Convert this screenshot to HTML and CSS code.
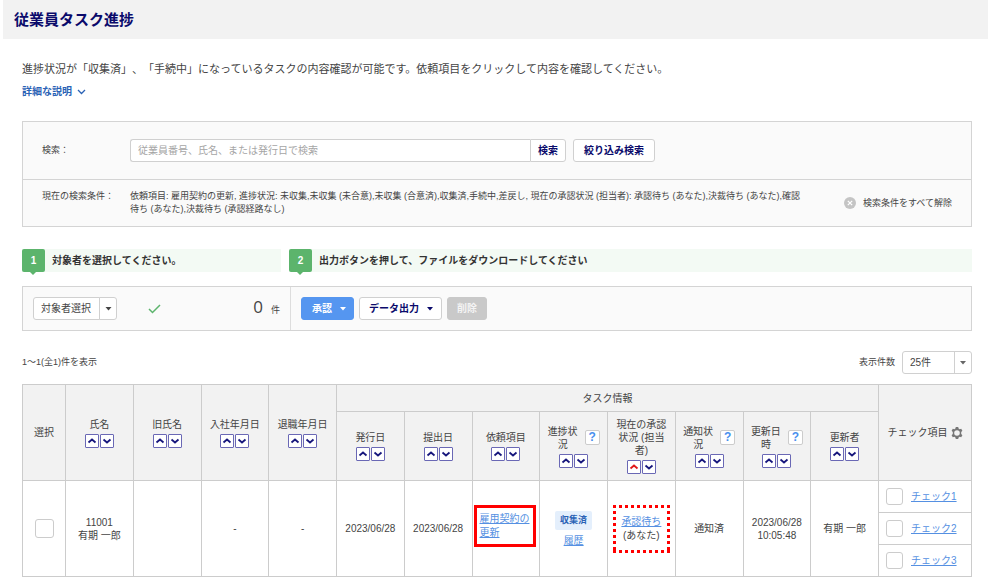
FILE: index.html
```html
<!DOCTYPE html>
<html lang="ja">
<head>
	<meta charset="utf-8">
	<title>従業員タスク進捗</title>
	<meta name="viewport" content="width=device-width, initial-scale=1">
	<link rel="stylesheet" href="styles.css">
</head>
<body>

<svg class="sprite" aria-hidden="true">
	<symbol id="up" viewBox="0 0 12 12"><path d="M2.5 7.5L6 4.5l3.5 3" fill="none" stroke="currentColor" stroke-width="1.8"/></symbol>
	<symbol id="down" viewBox="0 0 12 12"><path d="M2.5 4.5L6 7.5l3.5-3" fill="none" stroke="currentColor" stroke-width="1.8"/></symbol>
	<symbol id="caret" viewBox="0 0 6 4"><path d="M0 0h6L3 3.5z" fill="currentColor"/></symbol>
</svg>

<header class="page-head">
	<h1>従業員タスク進捗</h1>
</header>

<main class="content">
	<p class="lead">進捗状況が「収集済」、「手続中」になっているタスクの内容確認が可能です。依頼項目をクリックして内容を確認してください。</p>
	<a href="#" class="detail">詳細な説明
		<svg width="9" height="6" viewBox="0 0 9 6"><path d="M1 1l3.500 3.500L8 1" fill="none" stroke="currentColor" stroke-width="1.3"/></svg>
	</a>

	<section class="search">
		<form class="search-row">
			<label class="search-label" for="keyword">検索：</label>
			<input class="search-input" type="text" id="keyword" placeholder="従業員番号、氏名、または発行日で検索">
			<button type="button" class="btn btn-search">検索</button>
			<button type="button" class="btn btn-filter">絞り込み検索</button>
		</form>
		<div class="search-row conditions">
			<span class="search-label">現在の検索条件：</span>
			<p class="conditions-text">依頼項目: 雇用契約の更新, 進捗状況: 未収集,未収集 (未合意),未収集 (合意済),収集済,手続中,差戻し, 現在の承認状況 (担当者): 承認待ち (あなた),決裁待ち (あなた),確認待ち (あなた),決裁待ち (承認経路なし)</p>
			<button type="button" class="clear">
				<svg width="12" height="12" viewBox="0 0 12 12"><circle cx="6" cy="6" r="6" fill="#c4c4c4"/><path d="M3.800 3.800l4.400 4.400M8.200 3.800L3.800 8.200" stroke="#fff" stroke-width="1.200"/></svg>
				検索条件をすべて解除
			</button>
		</div>
	</section>

	<div class="steps">
		<div class="step step-select"><span class="step-num">1</span>対象者を選択してください。</div>
		<div class="step step-output"><span class="step-num">2</span>出力ボタンを押して、ファイルをダウンロードしてください</div>
	</div>

	<section class="actions">
		<div class="target">
			<div class="split">
				<button type="button" class="btn btn-target">対象者選択</button>
				<button type="button" class="btn btn-caret" aria-label="選択メニュー"><svg width="7" height="4"><use href="#caret"/></svg></button>
			</div>
			<svg class="tick" width="13" height="10" viewBox="0 0 13 10"><path d="M1 5l3.500 3.500L12 1" fill="none" stroke="#5cb46c" stroke-width="1.500"/></svg>
			<p class="count"><span class="count-num">0</span>件</p>
		</div>
		<div class="output">
			<button type="button" class="btn btn-approve">承認 <svg width="6" height="4"><use href="#caret"/></svg></button>
			<button type="button" class="btn btn-export">データ出力 <svg width="6" height="4"><use href="#caret"/></svg></button>
			<button type="button" class="btn btn-delete" disabled>削除</button>
		</div>
	</section>

	<div class="list-head">
		<span>1〜1(全1)件を表示</span>
		<div class="per-page">
			<label for="perpage">表示件数</label>
			<select class="per-select" id="perpage"><option>25件</option></select>
		</div>
	</div>

	<table class="tasks">
		<colgroup>
			<col class="col-select">
			<col span="12">
			<col class="col-check">
		</colgroup>
		<thead>
			<tr class="group-row">
				<th rowspan="2">選択</th>
				<th rowspan="2">氏名
					<div class="sort"><button aria-label="昇順"><svg><use href="#up"/></svg></button><button aria-label="降順"><svg><use href="#down"/></svg></button></div></th>
				<th rowspan="2">旧氏名
					<div class="sort"><button aria-label="昇順"><svg><use href="#up"/></svg></button><button aria-label="降順"><svg><use href="#down"/></svg></button></div></th>
				<th rowspan="2">入社年月日
					<div class="sort"><button aria-label="昇順"><svg><use href="#up"/></svg></button><button aria-label="降順"><svg><use href="#down"/></svg></button></div></th>
				<th rowspan="2">退職年月日
					<div class="sort"><button aria-label="昇順"><svg><use href="#up"/></svg></button><button aria-label="降順"><svg><use href="#down"/></svg></button></div></th>
				<th colspan="8">タスク情報</th>
				<th rowspan="2"><span class="check-title">チェック項目
					<button class="gear" aria-label="設定"><svg width="12" height="12" viewBox="0 0 12 12"><path fill="#777" fill-rule="evenodd" d="M4.800 0h2.400l.4 1.600 1 .6L10.200 1.700l1.200 2.100L10.200 5v2l1.200 1.200-1.200 2.100-1.600-.5-1 .6-.4 1.600H4.800l-.4-1.600-1-.6-1.600.5L.6 8.200 1.800 7V5L.6 3.800l1.200-2.100 1.600.5 1-.6zM6 3.200a2.800 2.800 0 1 0 0 5.600 2.800 2.800 0 0 0 0-5.600z"/></svg></button></span></th>
			</tr>
			<tr class="field-row">
				<th>発行日
					<div class="sort"><button aria-label="昇順"><svg><use href="#up"/></svg></button><button aria-label="降順"><svg><use href="#down"/></svg></button></div></th>
				<th>提出日
					<div class="sort"><button aria-label="昇順"><svg><use href="#up"/></svg></button><button aria-label="降順"><svg><use href="#down"/></svg></button></div></th>
				<th>依頼項目
					<div class="sort"><button aria-label="昇順"><svg><use href="#up"/></svg></button><button aria-label="降順"><svg><use href="#down"/></svg></button></div></th>
				<th><div class="with-help"><span>進捗状況</span><button class="help">?</button></div>
					<div class="sort"><button aria-label="昇順"><svg><use href="#up"/></svg></button><button aria-label="降順"><svg><use href="#down"/></svg></button></div></th>
				<th><div class="approval-title">現在の承認状況 (担当者)</div>
					<div class="sort"><button class="active" aria-label="昇順"><svg><use href="#up"/></svg></button><button aria-label="降順"><svg><use href="#down"/></svg></button></div></th>
				<th><div class="with-help"><span>通知状況</span><button class="help">?</button></div>
					<div class="sort"><button aria-label="昇順"><svg><use href="#up"/></svg></button><button aria-label="降順"><svg><use href="#down"/></svg></button></div></th>
				<th><div class="with-help"><span>更新日時</span><button class="help">?</button></div>
					<div class="sort"><button aria-label="昇順"><svg><use href="#up"/></svg></button><button aria-label="降順"><svg><use href="#down"/></svg></button></div></th>
				<th>更新者
					<div class="sort"><button aria-label="昇順"><svg><use href="#up"/></svg></button><button aria-label="降順"><svg><use href="#down"/></svg></button></div></th>
			</tr>
		</thead>
		<tbody>
			<tr>
				<td rowspan="3"><input type="checkbox" class="check check-row" aria-label="選択"></td>
				<td rowspan="3">11001<br>有期 一郎</td>
				<td rowspan="3"></td>
				<td rowspan="3">-</td>
				<td rowspan="3">-</td>
				<td rowspan="3">2023/06/28</td>
				<td rowspan="3">2023/06/28</td>
				<td rowspan="3" class="request"><div class="mark"><a href="#">雇用契約の更新</a></div></td>
				<td rowspan="3"><span class="status">収集済</span><a href="#">履歴</a></td>
				<td rowspan="3"><div class="mark-dotted"><a href="#">承認待ち</a><br>(あなた)</div></td>
				<td rowspan="3">通知済</td>
				<td rowspan="3">2023/06/28<br>10:05:48</td>
				<td rowspan="3">有期 一郎</td>
				<td class="check-cell"><div class="check-item"><input type="checkbox" class="check" aria-label="チェック1"><a href="#">チェック1</a></div></td>
			</tr>
			<tr>
				<td class="check-cell"><div class="check-item"><input type="checkbox" class="check" aria-label="チェック2"><a href="#">チェック2</a></div></td>
			</tr>
			<tr>
				<td class="check-cell"><div class="check-item"><input type="checkbox" class="check" aria-label="チェック3"><a href="#">チェック3</a></div></td>
			</tr>
		</tbody>
	</table>
</main>

</body>
</html>
```

FILE: styles.css
```css
* {
	box-sizing: border-box;
}
body {
	margin: 0;
	color: #444;
	font-family: "Liberation Sans", "Noto Sans CJK JP", sans-serif;
	font-size: 10px;
	line-height: 13px;
	text-spacing-trim: space-all;
	background: #fff;
}
button, input, select {
	margin: 0;
	padding: 0;
	color: inherit;
	font: inherit;
}
p {
	margin: 0;
}
a {
	color: #5590e2;
}
.sprite {
	display: none;
}
.page-head {
	margin-left: 3px;
	padding: 8px 11px;
	background: #f2f2f2;
}
.page-head h1 {
	margin: 0;
	color: #0a0a6b;
	font-size: 15px;
	line-height: 23px;
}
.content {
	padding: 20px 16px 4px 22px;
}
.lead {
	font-size: 11px;
	line-height: 20px;
}
.detail {
	display: inline-flex;
	align-items: center;
	gap: 5px;
	margin-top: 5px;
	color: #2a62b5;
	font-weight: bold;
	line-height: 16px;
	text-decoration: none;
}

/* search */
.search {
	margin-top: 21px;
	background: #fafafa;
	border: 1px solid #d4d4d4;
}
.search-row {
	display: flex;
	align-items: center;
	padding: 17px 19px;
}
.search-label {
	flex: 0 0 88px;
	font-size: 9px;
}
.search-input {
	flex: 0 1 400px;
	min-width: 0;
	height: 23px;
	padding: 0 7px;
	background: #fff;
	border: 1px solid #d0d0d0;
	border-right: none;
	border-radius: 3px 0 0 3px;
}
.search-input::placeholder {
	color: #a5a5a5;
}
.btn {
	display: inline-flex;
	align-items: center;
	justify-content: center;
	height: 23px;
	padding: 0 10px;
	color: #0a0a6b;
	font-weight: bold;
	white-space: nowrap;
	background: #fff;
	border: 1px solid #d0d0d0;
	border-radius: 3px;
}
.btn-search {
	padding: 0 7px;
	border-radius: 0 3px 3px 0;
}
.btn-filter {
	margin-left: 7px;
}
.conditions {
	align-items: flex-start;
	padding-top: 10px;
	padding-bottom: 10px;
	font-size: 9px;
	border-top: 1px solid #d4d4d4;
}
.conditions-text {
	flex: 0 1 674px;
}
.clear {
	display: flex;
	align-items: center;
	align-self: center;
	gap: 7px;
	margin-left: auto;
	white-space: nowrap;
	background: none;
	border: none;
}

/* steps */
.steps {
	display: flex;
	gap: 8px;
	margin-top: 22px;
}
.step {
	display: flex;
	align-items: center;
	gap: 7px;
	color: #333;
	font-weight: bold;
	line-height: 23px;
	background: #f3faf4;
}
.step-select {
	flex: 0 0 259px;
}
.step-output {
	flex: 1;
}
.step-num {
	position: relative;
	width: 23px;
	color: #fff;
	text-align: center;
	background: #5cb46c;
	border-radius: 2px;
}
.step-num::after {
	content: "";
	position: absolute;
	top: 100%;
	left: 8px;
	border: 3px solid transparent;
	border-top-color: #5cb46c;
}
.actions {
	display: flex;
	margin-top: 14px;
	background: #fafafa;
	border: 1px solid #d4d4d4;
}
.target {
	display: flex;
	flex: 0 0 268px;
	align-items: center;
	padding: 10px;
	border-right: 1px solid #ddd;
}
.split {
	display: flex;
}
.btn-target {
	padding: 0 8px 0 7px;
	color: #444;
	font-weight: normal;
	border-radius: 3px 0 0 3px;
}
.btn-caret {
	width: 18px;
	margin-left: -1px;
	padding: 0;
	color: #444;
	border-radius: 0 3px 3px 0;
}
.tick {
	margin-left: 31px;
}
.count {
	display: flex;
	align-items: baseline;
	gap: 8px;
	margin-left: auto;
	font-size: 9px;
}
.count-num {
	font-family: "Open Sans", sans-serif;
	font-size: 17px;
}
.output {
	display: flex;
	align-items: center;
	padding: 10px;
}
.btn-approve {
	gap: 8px;
	padding: 0 7px 0 10px;
	color: #fff;
	background: #5596f0;
	border-color: #5596f0;
}
.btn-export {
	gap: 8px;
	margin-left: 5px;
	padding: 0 8px 0 9px;
}
.btn-delete {
	margin-left: 5px;
	padding: 0 9px;
	color: #f4f4f4;
	background: #c9c9c9;
	border-color: #c9c9c9;
}

/* list */
.list-head {
	display: flex;
	align-items: center;
	justify-content: space-between;
	margin: 20px 0 10px;
	font-size: 9px;
}
.per-page {
	display: flex;
	align-items: center;
	gap: 7px;
}
.per-select {
	width: 70px;
	height: 23px;
	padding-left: 7px;
	font-size: 10px;
	background: #fff url("data:image/svg+xml,%3Csvg xmlns='http://www.w3.org/2000/svg' width='17' height='21'%3E%3Cpath d='M.5 0v21' stroke='%23d0d0d0'/%3E%3Cpath d='M6 9h6l-3 3.500z' fill='%23666'/%3E%3C/svg%3E") no-repeat right center;
	border: 1px solid #d0d0d0;
	border-radius: 3px;
	appearance: none;
}
.tasks {
	width: 100%;
	table-layout: fixed;
	border-collapse: collapse;
}
.col-select {
	width: 43px;
}
.col-check {
	width: 93px;
}
.tasks th, .tasks td {
	padding: 0;
	text-align: center;
	border: 1px solid #ccc;
}
.tasks th {
	font-weight: normal;
	background: #f2f2f2;
}
.group-row {
	height: 27px;
}
.field-row {
	height: 69px;
}
.sort {
	display: flex;
	justify-content: center;
	gap: 1px;
	margin-top: 3px;
}
.sort button {
	width: 14px;
	height: 14px;
	color: #16167c;
	background: #fff;
	border: 1px solid #6a68b5;
	border-radius: 1px;
}
.sort .active {
	color: #e01818;
}
.sort svg {
	display: block;
	width: 12px;
	height: 12px;
}
.with-help {
	display: flex;
	align-items: center;
	justify-content: center;
	gap: 7px;
}
.with-help span {
	width: 30px;
}
.help {
	width: 15px;
	height: 15px;
	color: #4a90ee;
	font-size: 12px;
	font-weight: bold;
	line-height: 13px;
	background: #fff;
	border: 1px solid #ccc;
	border-radius: 2px;
}
.approval-title {
	width: 51px;
	margin: 0 auto;
}
.check-title {
	display: flex;
	align-items: center;
	justify-content: center;
	gap: 3px;
}
.gear {
	background: none;
	border: none;
}
.gear svg {
	display: block;
}
.check {
	width: 17px;
	height: 17px;
	background: #fff;
	border: 1px solid #ccc;
	border-radius: 3px;
	appearance: none;
}
.check-row {
	width: 19px;
	height: 19px;
	vertical-align: middle;
}
.tasks .check-cell {
	height: 32px;
	padding: 0 7px;
}
.check-item {
	display: flex;
	align-items: center;
	gap: 8px;
}
.status {
	display: block;
	width: 37px;
	margin: 0 auto 4px;
	color: #2a62b5;
	font-size: 9px;
	font-weight: bold;
	line-height: 19px;
	background: #e4effc;
	border-radius: 2px;
}
.tasks .request {
	padding: 0 1px 6px;
	text-align: left;
}
.mark {
	width: 62px;
	padding: 4px 3px;
	line-height: 14px;
	border: 3px solid #f00;
}
.mark-dotted {
	--dots-x: linear-gradient(to right, #f00 50%, transparent 50%);
	--dots-y: linear-gradient(#f00 50%, transparent 50%);
	width: 57px;
	margin: 0 auto;
	padding: 10px 0;
	line-height: 14px;
	background:
		var(--dots-x) top left / 6px 3px repeat-x,
		var(--dots-x) bottom left / 6px 3px repeat-x,
		var(--dots-y) top left / 3px 6px repeat-y,
		var(--dots-y) top right / 3px 6px repeat-y;
}
```
